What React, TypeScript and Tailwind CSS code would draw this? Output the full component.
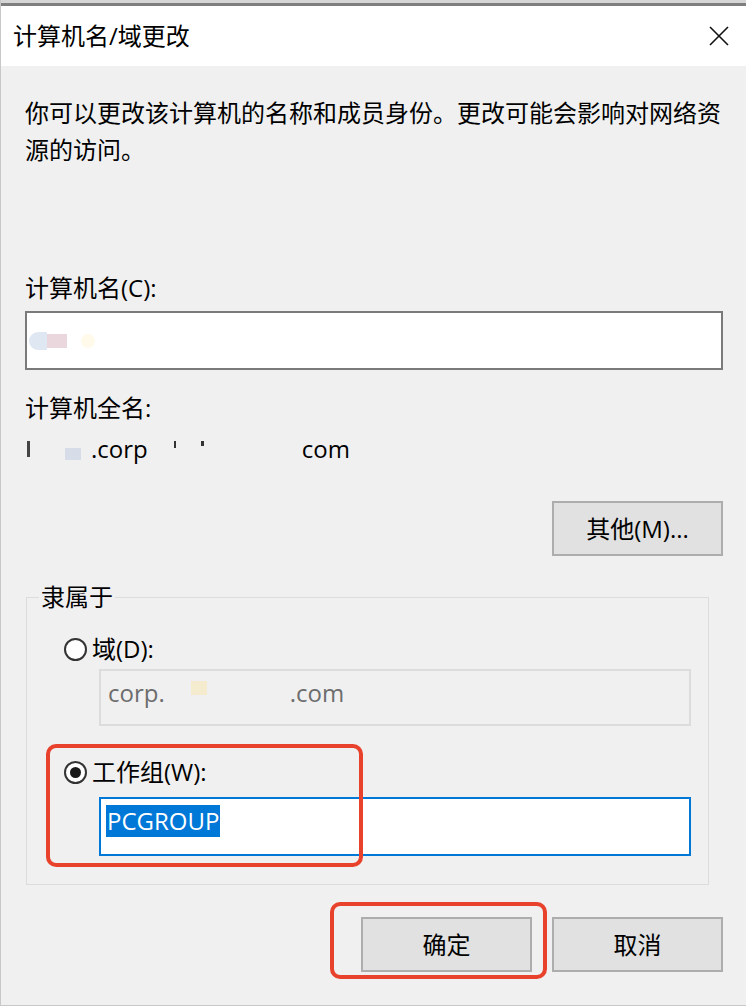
import React from "react";

const FONT = {
  fontFamily: '"Open Sans", "Noto Sans CJK SC", sans-serif',
};

function Radio({ checked }: { checked?: boolean }) {
  return (
    <div className="w-[23px] h-[23px] rounded-full border-2 border-[#333333] bg-white flex items-center justify-center shrink-0">
      {checked && <div className="w-[11px] h-[11px] rounded-full bg-[#1a1a1a]" />}
    </div>
  );
}

export default function App() {
  return (
    <div
      className="relative w-[746px] h-[1006px] bg-[#f0f0f0] border-l border-b border-[#c8c8c8] overflow-hidden text-black"
      style={FONT}
    >
      <div className="h-[3px] bg-[#d6d6d6]" />
      <div className="h-[3px] bg-[#7f7f7f]" />
      {/* title bar */}
      <div className="h-[60px] bg-white flex items-center justify-between pl-[12px] pr-[16px]">
        <div className="text-[24px] leading-none">计算机名/域更改</div>
        <svg width="22" height="22" viewBox="0 0 22 22">
          <path d="M2 2 L20 20 M20 2 L2 20" stroke="#111" strokeWidth="1.6" fill="none" />
        </svg>
      </div>

      {/* body */}
      <div className="flex flex-col pl-[24px] pr-[23px]">
        <div className="mt-[28px] text-[24px] leading-[37px] w-[698px]">
          你可以更改该计算机的名称和成员身份。更改可能会影响对网络资源的访问。
        </div>

        <div className="mt-[104px] text-[24px] leading-[32px]">计算机名(C):</div>
        <div className="mt-[7px] h-[59px] border-2 border-[#7a7a7a] bg-white flex items-center">
          <div className="flex items-center ml-[2px]">
            <div className="w-[18px] h-[18px] rounded-l-full bg-[#dfe7f3]" />
            <div className="w-[20px] h-[14px] bg-[#ead7de]" />
            <div className="w-[14px]" />
            <div className="w-[14px] h-[14px] rounded-full bg-[#fffaea]" />
          </div>
        </div>

        <div className="mt-[22px] text-[24px] leading-[32px]">计算机全名:</div>
        <div className="mt-[9px] text-[24px] leading-[32px] flex items-center">
          <span className="w-[3px] h-[16px] bg-[#444] ml-[2px]" />
          <span className="ml-[35px] w-[16px] h-[12px] bg-[#d7dde8] mt-[10px]" />
          <span className="ml-[10px]">.corp</span>
          <span className="ml-[26px] w-[2px] h-[7px] bg-[#333] -mt-[10px]" />
          <span className="ml-[25px] w-[3px] h-[5px] bg-[#333] -mt-[12px]" />
          <span className="ml-[98px]">com</span>
        </div>

        <div className="mt-[36px] flex justify-end">
          <div className="w-[171px] h-[55px] bg-[#e1e1e1] border-2 border-[#adadad] flex items-center justify-center text-[24px]">
            其他(M)...
          </div>
        </div>

        <fieldset className="mt-[27px] w-[683px] ml-[1px] border border-[#dcdcdc] pl-[37px] pr-[17px] pb-[28px]">
          <legend className="-ml-[25px] px-[2px] text-[24px] leading-[28px]">隶属于</legend>
          <div className="mt-[22px] flex items-center gap-[5px] h-[32px] text-[24px]">
            <Radio />
            <span>域(D):</span>
          </div>
          <div className="mt-[4px] ml-[35px] h-[57px] border-2 border-[#dcdcdc] bg-[#f0f0f0] flex items-start pt-[6px] pl-[7px] text-[24px] leading-[32px] text-[#6d6d6d]">
            <span>corp.</span>
            <span className="ml-[26px] mt-[4px] w-[16px] h-[14px] bg-[#f5ecd0]" />
            <span className="ml-[83px]">.com</span>
          </div>
          <div className="mt-[30px] flex items-center gap-[5px] h-[32px] text-[24px]">
            <Radio checked />
            <span>工作组(W):</span>
          </div>
          <div className="mt-[9px] ml-[35px] h-[59px] border-2 border-[#0078d7] bg-white flex items-start pl-[5px] pt-[6px]">
            <span className="bg-[#0078d7] text-white text-[24px] leading-[32px] px-[1px]">PCGROUP</span>
          </div>
        </fieldset>

        <div className="mt-[32px] flex justify-end gap-[20px]">
          <div className="w-[171px] h-[55px] bg-[#e1e1e1] border-2 border-[#adadad] flex items-center justify-center text-[24px]">
            确定
          </div>
          <div className="w-[171px] h-[55px] bg-[#e1e1e1] border-2 border-[#adadad] flex items-center justify-center text-[24px]">
            取消
          </div>
        </div>
      </div>

      {/* red highlight annotations */}
      <div className="absolute left-[45px] top-[744px] w-[317px] h-[123px] border-[4px] border-[#e8412c] rounded-[10px]" />
      <div className="absolute left-[329px] top-[902px] w-[217px] h-[77px] border-[4px] border-[#e8412c] rounded-[10px]" />
    </div>
  );
}
